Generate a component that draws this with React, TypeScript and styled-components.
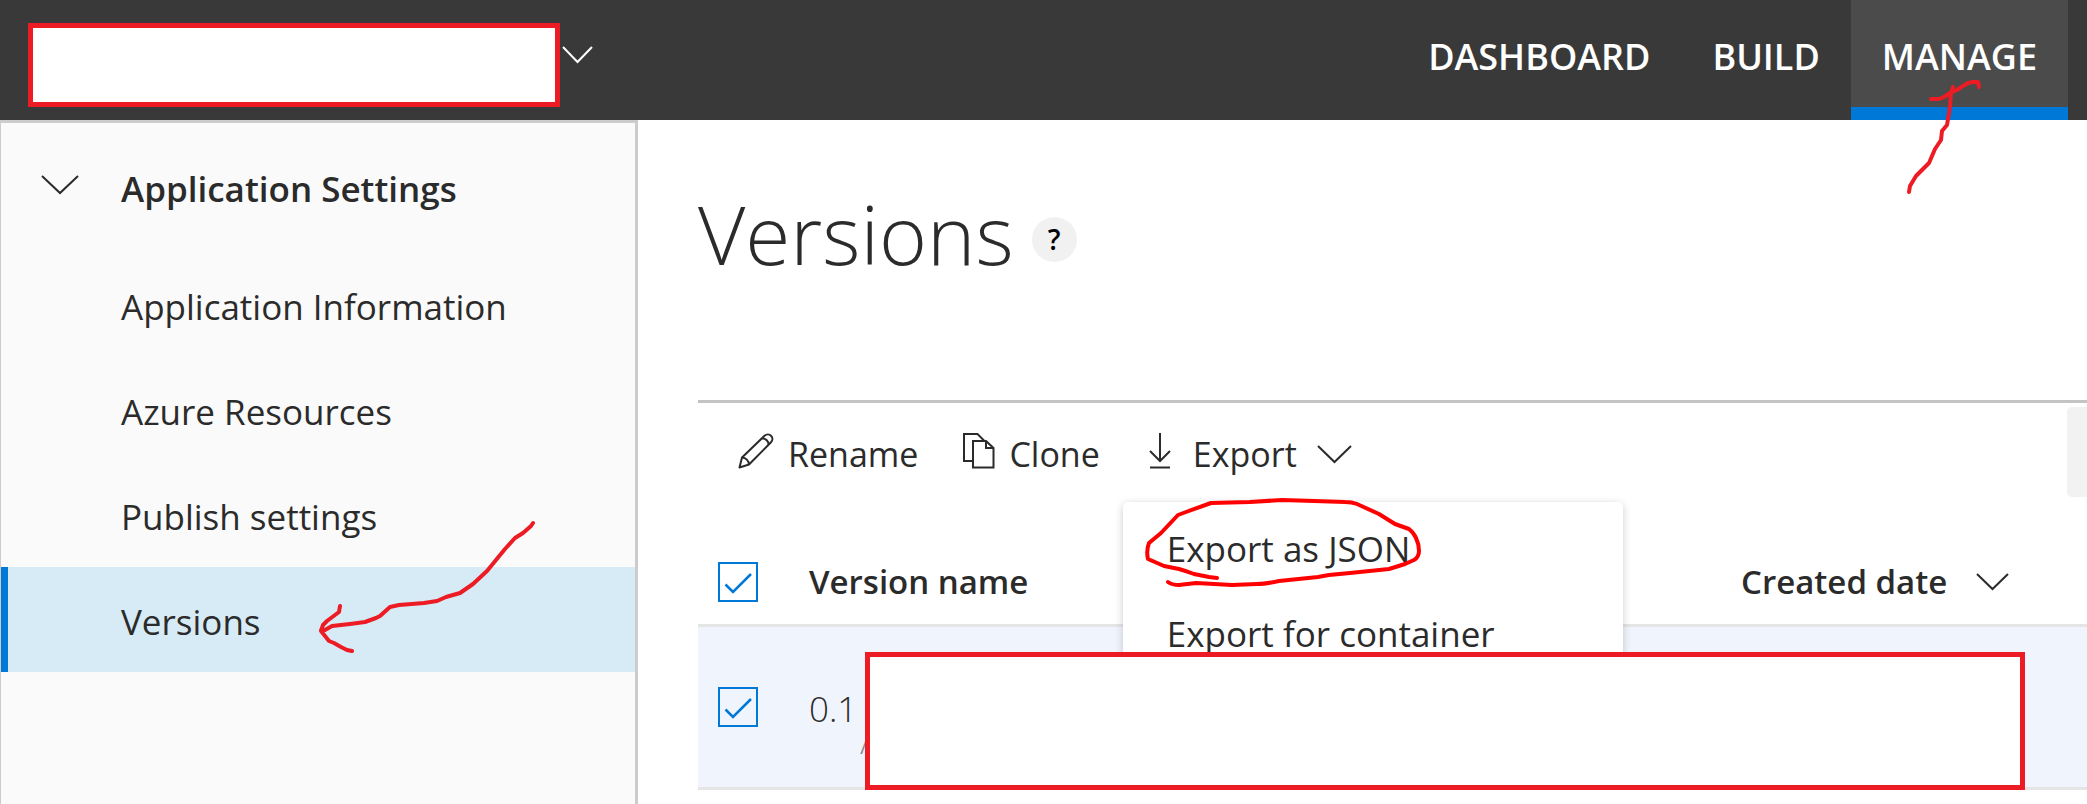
import React from "react";
import styled, { createGlobalStyle } from "styled-components";

const ink = "#2b2b2b";
const blue = "#0078d7";
const markRed = "#ed1c24";

const GlobalStyle = createGlobalStyle`
  *, *::before, *::after { box-sizing: border-box; }
  body {
    margin: 0;
    background: #fff;
    color: ${ink};
    font-family: "Open Sans", "Noto Sans", sans-serif;
    font-size: 34px;
    line-height: 48px;
  }
  button, input { font: inherit; color: inherit; }
  svg { display: block; }
`;

const Page = styled.div`
  display: flex;
  flex-direction: column;
  min-height: 100vh;
  overflow: hidden;
`;

const TopBar = styled.header`
  display: flex;
  align-items: stretch;
  justify-content: space-between;
  height: 120px;
  padding: 0 19px 0 28px;
  background: #393939;
  color: #fff;
`;

const AppPicker = styled.div`
  display: flex;
  align-items: flex-start;
  gap: 2px;
  padding-top: 23px;
`;

const AppName = styled.input`
  width: 532px;
  height: 84px;
  padding: 0 16px;
  border: 5px solid ${markRed};
  border-radius: 0;
  background: #fff;
  color: ${ink};
  outline: none;
`;

const IconButton = styled.button`
  padding: 0;
  border: 0;
  background: none;
`;

const PickerButton = styled(IconButton)`
  padding-top: 23px;
`;

const Nav = styled.nav`
  display: flex;
`;

const NavLink = styled.a<{ $active?: boolean }>`
  position: relative;
  display: flex;
  align-items: center;
  padding: 6px 31px 0;
  border-bottom: 13px solid ${(p) => (p.$active ? blue : "transparent")};
  background: ${(p) => (p.$active ? "#4b4b4b" : "none")};
  background-clip: padding-box;
  color: #fff;
  font-size: 36px;
  font-weight: 600;
  text-decoration: none;
`;

const Body = styled.div`
  display: flex;
  flex: 1;
`;

const Sidebar = styled.aside`
  flex: 0 0 638px;
  border: solid #ccc;
  border-width: 3px 3px 0 1px;
  background: #fafafa;
`;

const GroupToggle = styled.button`
  display: flex;
  align-items: center;
  gap: 42px;
  width: 100%;
  height: 129px;
  padding: 2px 0 0 40px;
  border: 0;
  background: none;
  font-size: 35px;
  font-weight: 600;

  svg { margin-bottom: 7px; }
`;

const SideLink = styled.a<{ $active?: boolean }>`
  position: relative;
  display: flex;
  align-items: center;
  height: 105px;
  padding: 4px 0 0 113px;
  border-left: 7px solid ${(p) => (p.$active ? blue : "transparent")};
  background: ${(p) => (p.$active ? "#d7ebf6" : "none")};
  color: inherit;
  font-size: 35px;
  text-decoration: none;
`;

const Main = styled.main`
  flex: 1;
  min-width: 0;
  padding-left: 60px;
`;

const TitleRow = styled.div`
  display: flex;
  align-items: center;
  gap: 18px;
  height: 280px;
  padding-bottom: 42px;
`;

const Title = styled.h1`
  margin: 0;
  padding-bottom: 12px;
  font-size: 82px;
  line-height: 108px;
  font-weight: 340;
`;

const HelpButton = styled.button`
  width: 45px;
  height: 45px;
  padding: 0;
  border: 0;
  border-radius: 50%;
  background: #f1f1f1;
  color: #000;
  font-size: 28px;
  line-height: 45px;
  font-weight: 600;
`;

const Toolbar = styled.div`
  display: flex;
  align-items: flex-start;
  height: 140px;
  padding: 4px 0 0 40px;
  border-top: 3px solid #c4c4c4;
`;

const Tool = styled.button`
  display: flex;
  align-items: center;
  gap: 14px;
  height: 94px;
  margin-right: 45px;
  padding: 0;
  border: 0;
  background: none;

  svg:first-child { margin-bottom: 6px; }
  svg + svg { margin-left: 6px; }
`;

const ExportGroup = styled.div`
  position: relative;
`;

const Menu = styled.div`
  position: absolute;
  top: 95px;
  left: -22px;
  z-index: 1;
  width: 500px;
  height: 190px;
  padding-top: 4px;
  border-radius: 5px;
  background: #fff;
  box-shadow: 0 2px 8px rgba(0, 0, 0, 0.2);
`;

const MenuItem = styled.button`
  display: block;
  width: 100%;
  height: 85px;
  padding: 0 44px;
  border: 0;
  background: none;
  font-size: 35px;
  text-align: left;
`;

const SearchButton = styled.button`
  width: 20px;
  height: 90px;
  margin-left: auto;
  border: 0;
  border-radius: 5px 0 0 5px;
  background: #f2f2f2;
`;

const TableArea = styled.div`
  position: relative;
`;

const Table = styled.table`
  width: 100%;
  border-collapse: separate;
  border-spacing: 0;
  table-layout: fixed;
`;

const Th = styled.th`
  height: 87px;
  padding: 0;
  border-bottom: 3px solid #e5e5e5;
  font-size: 33px;
  font-weight: 600;
  text-align: left;
`;

const Td = styled.td`
  height: 163px;
  padding: 0;
  border-bottom: 3px solid #e5e5e5;
  background: #f0f5fd;
`;

const CheckCol = styled.col`
  width: 111px;
`;

const DateCol = styled.col`
  width: 346px;
`;

const CheckLabel = styled.label`
  position: relative;
  display: block;
  width: 40px;
  height: 40px;
  margin-left: 20px;

  svg {
    position: absolute;
    inset: 0;
    pointer-events: none;
  }
`;

const CheckInput = styled.input`
  display: block;
  width: 40px;
  height: 40px;
  margin: 0;
  border: 2px solid ${blue};
  appearance: none;
`;

const SortButton = styled(IconButton)`
  display: flex;
  align-items: center;
  gap: 29px;
  font-weight: 600;
`;

const VersionCell = styled.div`
  display: flex;
  align-items: center;
  gap: 3px;
  padding-top: 4px;
`;

const VersionNumber = styled.span`
  font-size: 35px;
  font-weight: 300;
`;

const VersionNote = styled.span`
  padding-top: 64px;
  color: #8a8a8a;
  font-weight: 300;
`;

const HiddenArea = styled.div`
  position: absolute;
  right: 62px;
  bottom: 0;
  left: 167px;
  z-index: 2;
  height: 138px;
  border: 5px solid ${markRed};
  background: #fff;
`;

const Mark = styled.svg<{ $x: number; $y: number; $color?: string }>`
  position: absolute;
  left: ${(p) => p.$x}px;
  top: ${(p) => p.$y}px;
  z-index: 3;
  fill: none;
  stroke: ${(p) => p.$color ?? markRed};
  stroke-width: 4;
  stroke-linecap: round;
  stroke-linejoin: round;
  pointer-events: none;
`;

function Chevron({ width, height }: { width: number; height: number }) {
  return (
    <svg width={width} height={height} fill="none" stroke="currentColor" strokeWidth="2" aria-hidden="true">
      <path d={`M1 1L${width / 2} ${height - 2}L${width - 1} 1`} />
    </svg>
  );
}

function PencilIcon() {
  return (
    <svg width="36" height="36" viewBox="0 0 36 36" fill="none" stroke="currentColor" strokeWidth="2" strokeLinejoin="round" aria-hidden="true">
      <path d="M1.5 34.5L4 24.5L26.5 2.8C28.6 .9 31.3 1 33 2.8C34.8 4.6 34.9 7.3 33 9.3L11 31.5Z" />
      <path d="M4 24.5C7.8 24.7 10.8 27.7 11 31.5M24 5.3C28 5.8 30.3 8 30.7 11.7" />
    </svg>
  );
}

function CopyIcon() {
  return (
    <svg width="32" height="36" viewBox="0 0 32 36" fill="none" stroke="currentColor" strokeWidth="2" aria-hidden="true">
      <path d="M10 28H1V1H14.5L21 7.5" />
      <path d="M10 8H23L30.5 15V34.5H10Z" />
      <path d="M23 8V15H30.5" />
    </svg>
  );
}

function DownloadIcon() {
  return (
    <svg width="34" height="36" viewBox="0 0 34 36" fill="none" stroke="currentColor" strokeWidth="2" aria-hidden="true">
      <path d="M15 0V28M5 18L15 28L25 18M5 34.5H25" />
    </svg>
  );
}

function Checkbox({ label }: { label: string }) {
  return (
    <CheckLabel>
      <CheckInput type="checkbox" defaultChecked aria-label={label} />
      <svg width="40" height="40" fill="none" stroke={blue} strokeWidth="2.5" aria-hidden="true">
        <path d="M7.5 22.5L15 30L33 12" />
      </svg>
    </CheckLabel>
  );
}

export default function App() {
  return (
    <Page>
      <GlobalStyle />
      <TopBar>
        <AppPicker>
          <AppName aria-label="Application name" />
          <PickerButton aria-label="Switch application">
            <Chevron width={31} height={18} />
          </PickerButton>
        </AppPicker>
        <Nav>
          <NavLink href="#dashboard">DASHBOARD</NavLink>
          <NavLink href="#build">BUILD</NavLink>
          <NavLink href="#manage" $active>
            MANAGE
            <Mark $x={49} $y={75} width="90" height="125" viewBox="1900 75 90 125">
              <path d="M1931 99H1939L1944 97L1950 93L1957 90L1963 86L1968 83L1973 82H1978L1979 87M1953 87L1951 93L1950 105L1949 113L1947 125L1942 131L1941 140L1935 149L1929 163L1924 168L1916 176L1910 186L1909 192" />
            </Mark>
          </NavLink>
        </Nav>
      </TopBar>
      <Body>
        <Sidebar>
          <GroupToggle>
            <Chevron width={38} height={20} />
            Application Settings
          </GroupToggle>
          <SideLink href="#information">Application Information</SideLink>
          <SideLink href="#resources">Azure Resources</SideLink>
          <SideLink href="#publish">Publish settings</SideLink>
          <SideLink href="#versions" $active>
            Versions
            <Mark $x={301} $y={-52} width="230" height="140" viewBox="310 515 230 140">
              <path d="M534 523L532 526L524 533L516 538L506 549L497 560L488 571L474 584L461 593L447 597L438 601L425 603L400 605L391 607L381 616L377 618L366 622L351 624L333 626L326 630H322M341 606L340 612L328 621L324 625L322 631L330 641L335 643L342 647L348 650L353 651" />
            </Mark>
          </SideLink>
        </Sidebar>
        <Main>
          <TitleRow>
            <Title>Versions</Title>
            <HelpButton aria-label="Help">?</HelpButton>
          </TitleRow>
          <Toolbar>
            <Tool>
              <PencilIcon />
              Rename
            </Tool>
            <Tool>
              <CopyIcon />
              Clone
            </Tool>
            <ExportGroup>
              <Tool>
                <DownloadIcon />
                Export
                <Chevron width={35} height={19} />
              </Tool>
              <Menu>
                <MenuItem>Export as JSON</MenuItem>
                <MenuItem>Export for container</MenuItem>
                <Mark $x={17} $y={-7} $color="#f00" width="290" height="100" viewBox="1140 495 290 100">
                  <path d="M1217 578L1209 577L1194 574Q1186 571 1179 569L1164 566L1148 559Q1146 551 1149 543L1161 533L1178 515L1186 512L1211 503L1250 502L1282 500L1314 501L1345 502Q1352 502 1357 504L1379 514L1395 524L1409 529Q1414 533 1416 538Q1419 544 1419 551Q1419 557 1414 560L1405 564L1389 569L1350 573L1329 575L1318 577L1279 581Q1265 584 1257 584L1232 585L1196 583L1179 585Q1172 585 1168 582" />
                </Mark>
              </Menu>
            </ExportGroup>
            <SearchButton aria-label="Search versions" />
          </Toolbar>
          <TableArea>
            <Table>
              <colgroup>
                <CheckCol />
                <col />
                <DateCol />
              </colgroup>
              <thead>
                <tr>
                  <Th><Checkbox label="Select all versions" /></Th>
                  <Th>Version name</Th>
                  <Th aria-sort="descending">
                    <SortButton>
                      Created date
                      <Chevron width={33} height={18} />
                    </SortButton>
                  </Th>
                </tr>
              </thead>
              <tbody>
                <tr>
                  <Td><Checkbox label="Select version 0.1" /></Td>
                  <Td>
                    <VersionCell>
                      <VersionNumber>0.1</VersionNumber>
                      <VersionNote>A</VersionNote>
                    </VersionCell>
                  </Td>
                  <Td />
                </tr>
              </tbody>
            </Table>
            <HiddenArea />
          </TableArea>
        </Main>
      </Body>
    </Page>
  );
}
